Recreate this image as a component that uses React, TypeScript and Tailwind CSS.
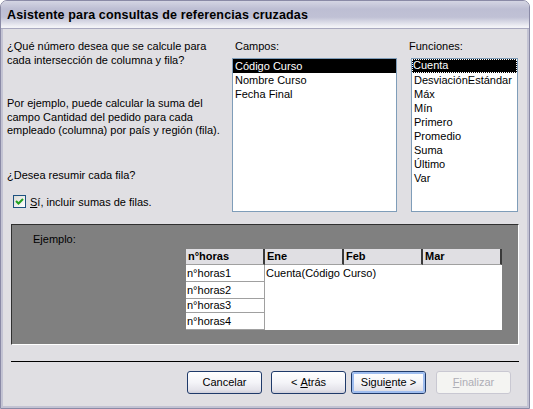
import React from "react";

const campos = ["Código Curso", "Nombre Curso", "Fecha Final"];
const funciones = [
  "Cuenta",
  "DesviaciónEstándar",
  "Máx",
  "Mín",
  "Primero",
  "Promedio",
  "Suma",
  "Último",
  "Var",
];

function Btn({
  children,
  variant = "normal",
}: {
  children: React.ReactNode;
  variant?: "normal" | "default" | "disabled";
}) {
  if (variant === "disabled") {
    return (
      <div className="w-[75px] h-[23px] rounded-[3px] border border-[#c9c8d2] bg-[#f4f4f2] flex items-center justify-center text-[#aeaeb6]">
        {children}
      </div>
    );
  }
  return (
    <div className="w-[75px] h-[23px] rounded-[3px] border border-[#1f3a6a] bg-[linear-gradient(to_bottom,#ffffff_0%,#f4f4f8_50%,#e4e3ea_85%,#cfcfdb_100%)] flex items-center justify-center">
      <div
        className={
          variant === "default"
            ? "w-full h-full rounded-[2px] border-2 border-[#9fbdef] flex items-center justify-center"
            : "w-full h-full flex items-center justify-center"
        }
      >
        {children}
      </div>
    </div>
  );
}

export default function App() {
  return (
    <div className="w-[533px] h-[409px] bg-white font-['Liberation_Sans',Arial,sans-serif] text-[11px] text-black overflow-hidden">
      <div className="w-[530px] h-[409px] flex flex-col rounded-t-[7px] border border-[#8a8aa6] bg-[#e0dfe3] overflow-hidden">
        {/* title bar */}
        <div className="h-[28px] shrink-0 bg-[linear-gradient(to_bottom,#d4d5e3_0%,#bdbed3_30%,#c0c1d5_60%,#f3f3f7_96%)] border-b border-[#a9a9bf] flex items-center pl-[6px]">
          <span className="font-bold text-[12.5px] tracking-[0.15px] text-[#000] leading-none mt-[2px]">
            Asistente para consultas de referencias cruzadas
          </span>
        </div>
        {/* body */}
        <div className="flex-1 flex flex-col border-x-2 border-b-2 border-[#c3c3d3]">
          {/* top section */}
          <div className="flex pl-[4px] pt-[10px]">
            <div className="w-[225px] flex flex-col">
              <p className="leading-[14px]">
                ¿Qué número desea que se calcule para
                <br />
                cada intersección de columna y fila?
              </p>
              <p className="leading-[13.5px] mt-[30px]">
                Por ejemplo, puede calcular la suma del
                <br />
                campo Cantidad del pedido para cada
                <br />
                empleado (columna) por país y región (fila).
              </p>
              <p className="leading-[14px] mt-[30px]">¿Desea resumir cada fila?</p>
              <div className="flex items-center mt-[13px] ml-[6px]">
                <div className="w-[13px] h-[13px] border border-[#1c5180] bg-[linear-gradient(135deg,#dcdcd6,#ffffff)] flex items-center justify-center">
                  <svg width="9" height="9" viewBox="0 0 9 9">
                    <path d="M1 4 L3.5 6.5 L8 2" stroke="#21a121" strokeWidth="2" fill="none" />
                  </svg>
                </div>
                <span className="ml-[4px] leading-[14px]">
                  <span className="underline">S</span>í, incluir sumas de filas.
                </span>
              </div>
            </div>
            <div className="w-[165px] flex flex-col">
              <span className="leading-[14px] pl-[3px]">Campos:</span>
              <div className="mt-[5px] h-[154px] border border-[#7f9db9] bg-white flex flex-col">
                {campos.map((c, i) => (
                  <div
                    key={c}
                    className={
                      i === 0
                        ? "h-[14px] leading-[14px] pl-[2px] bg-black text-white"
                        : "h-[14px] leading-[14px] pl-[2px]"
                    }
                  >
                    {c}
                  </div>
                ))}
              </div>
            </div>
            <div className="w-[107px] ml-[14px] flex flex-col">
              <span className="leading-[14px] -ml-[2px]">Funciones:</span>
              <div className="mt-[5px] h-[154px] border border-[#7f9db9] bg-white flex flex-col">
                {funciones.map((c, i) => (
                  <div
                    key={c}
                    className={
                      i === 0
                        ? "h-[14px] leading-[12px] pl-[1px] bg-black text-white outline outline-1 outline-dotted outline-white -outline-offset-1"
                        : "h-[14px] leading-[14px] pl-[2px]"
                    }
                  >
                    {c}
                  </div>
                ))}
              </div>
            </div>
          </div>
          {/* example panel */}
          <div className="ml-[8px] mt-[12px] w-[508px] h-[121px] bg-[#808080] border-t border-l border-[#303030] border-b border-r border-b-white border-r-white flex flex-col">
            <span className="ml-[21px] mt-[7px] leading-[14px]">Ejemplo:</span>
            <div className="ml-[174px] mt-[3px] flex flex-col w-[316px]">
              <div className="flex h-[16px] font-bold">
                {["n°horas", "Ene", "Feb", "Mar"].map((h) => (
                  <div
                    key={h}
                    className="w-[79px] h-[16px] bg-[#e0dfe3] border-r-2 border-r-[#3a3a3a] border-b border-b-[#a0a0a0] leading-[15px] pl-[2px]"
                  >
                    {h}
                  </div>
                ))}
              </div>
              <div className="flex">
                <div className="w-[79px] flex flex-col">
                  {[
                    ["n°horas1", "h-[17px]"],
                    ["n°horas2", "h-[17px]"],
                    ["n°horas3", "h-[14px]"],
                    ["n°horas4", "h-[17px]"],
                  ].map(([t, h]) => (
                    <div
                      key={t}
                      className={`${h} bg-white border-b border-r border-[#a0a0a0] pl-[1px] flex items-center`}
                    >
                      {t}
                    </div>
                  ))}
                </div>
                <div className="w-[237px] h-[65px] bg-white pl-[1px]">
                  <div className="h-[16px] leading-[16px]">Cuenta(Código Curso)</div>
                </div>
              </div>
            </div>
          </div>
          {/* separator */}
          <div className="ml-[8px] mt-[16px] w-[508px] h-px bg-black" />
          {/* buttons */}
          <div className="flex mt-[9px] pl-[184px]">
            <Btn>Cancelar</Btn>
            <div className="ml-[9px]">
              <Btn>
                &lt; <span className="underline ml-[3px]">A</span>trás
              </Btn>
            </div>
            <div className="ml-[5px]">
              <Btn variant="default">
                Sigui<span className="underline">e</span>nte &gt;
              </Btn>
            </div>
            <div className="ml-[10px]">
              <Btn variant="disabled">
                <span className="underline">F</span>inalizar
              </Btn>
            </div>
          </div>
        </div>
      </div>
    </div>
  );
}
